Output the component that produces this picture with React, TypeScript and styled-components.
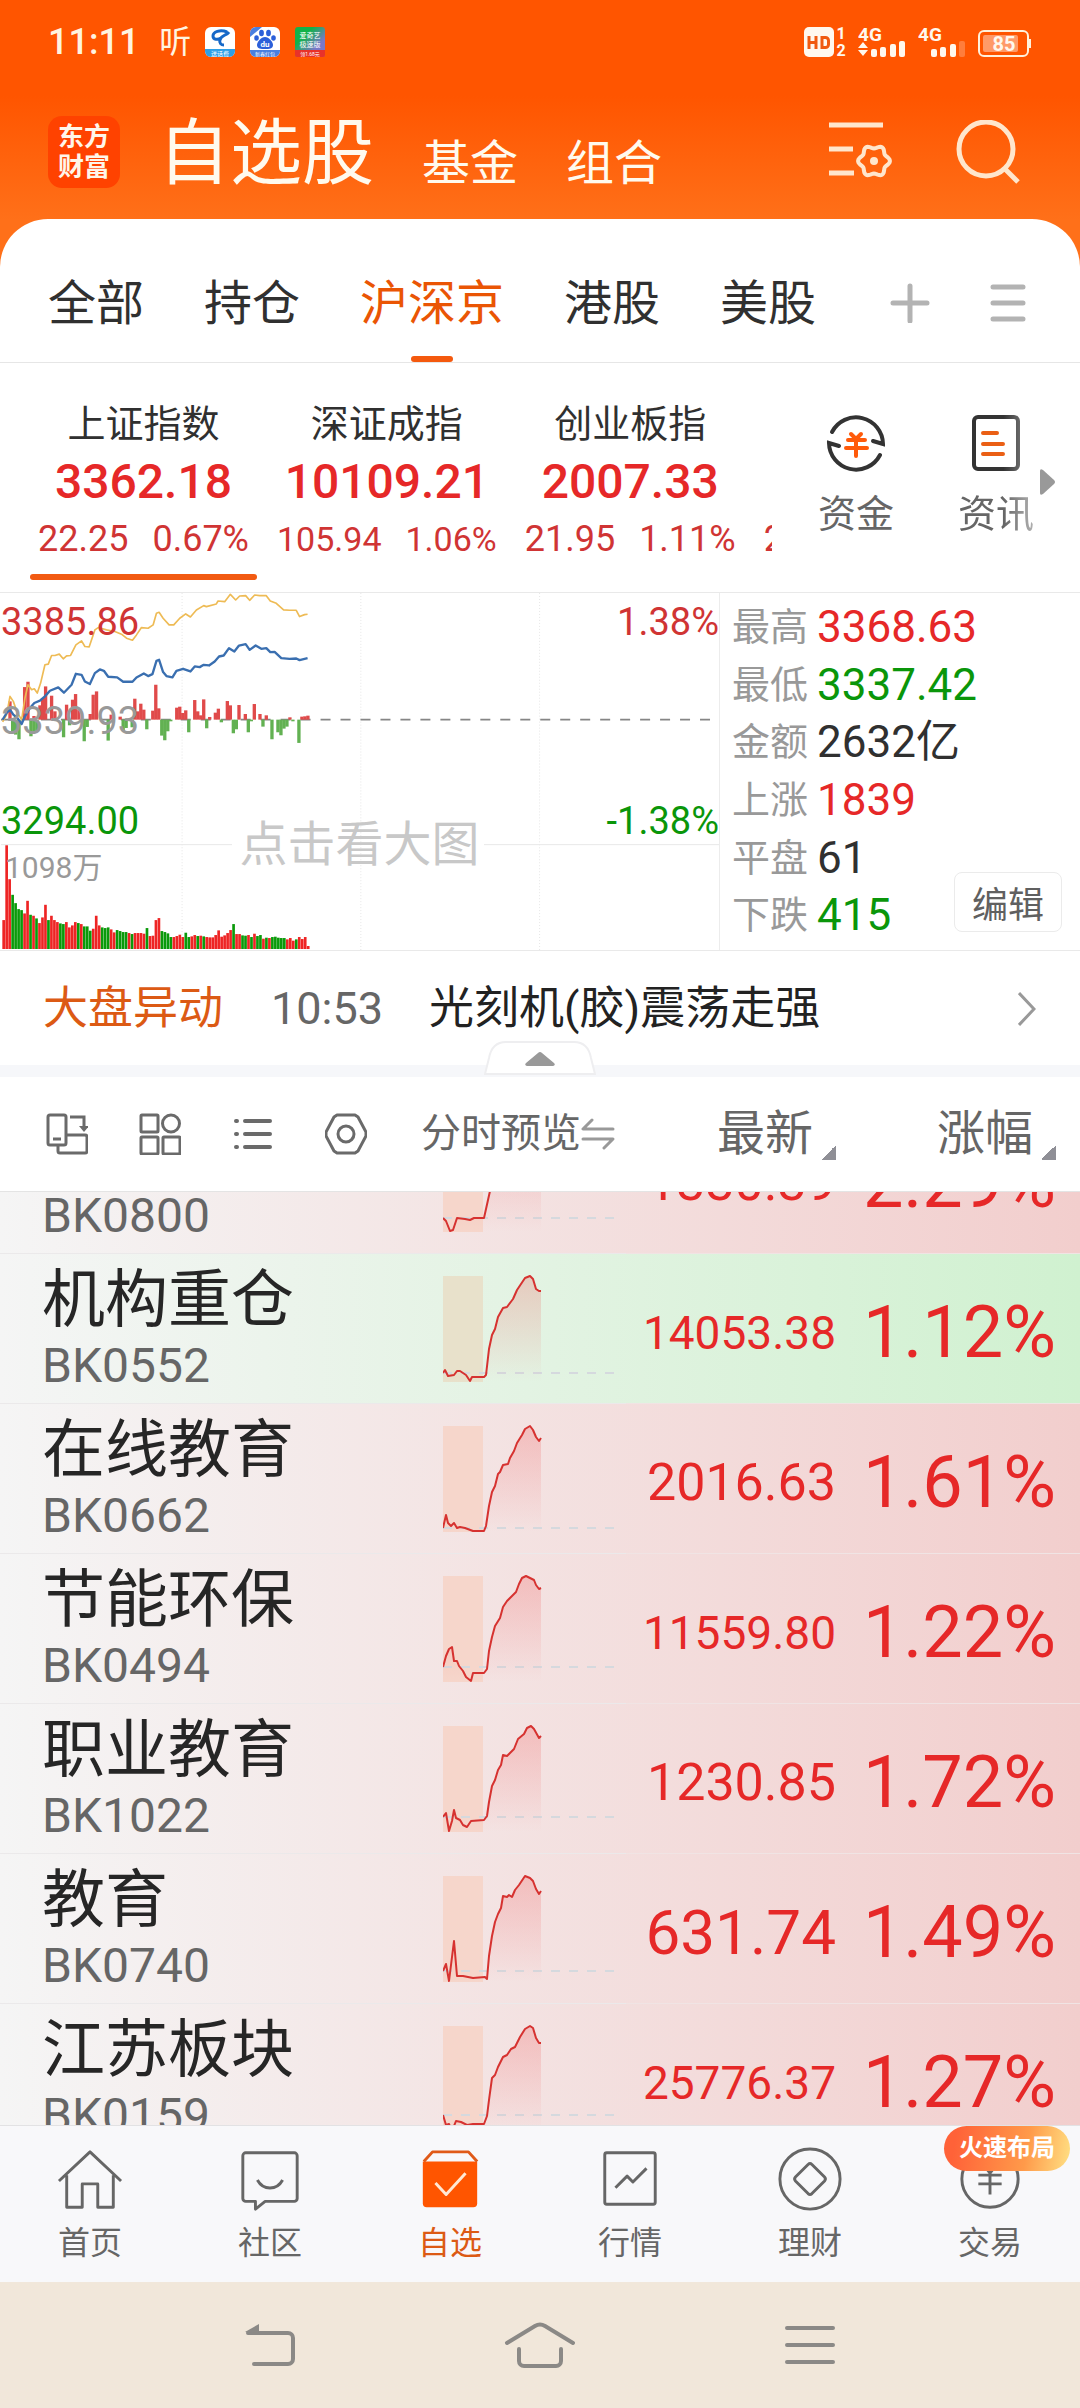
import React, { useLayoutEffect, useRef } from 'react';
import styled, { createGlobalStyle } from 'styled-components';

const RED = '#e62828';
const GREEN = '#0a960a';
const ORANGE = '#ea5504';

const GlobalStyle = createGlobalStyle`
  * { box-sizing: border-box; }
  html, body, #root { height: 100%; }
  body { margin: 0; background: #fff; }
  body, button {
    font-family: Roboto, "Noto Sans CJK SC", sans-serif;
    color: #303030;
  }
  button {
    margin: 0; padding: 0; border: 0; background: none;
    font-size: inherit; line-height: inherit; white-space: nowrap;
  }
  a { color: inherit; text-decoration: none; }
  svg { display: block; flex: none; }
`;

const Screen = styled.div`
  display: flex;
  flex-direction: column;
  height: 100vh;
  overflow: hidden;
`;

/* ---------- top ---------- */
const Top = styled.header`
  background: linear-gradient(#ff5500 0, #ff5500 96px, #ff7019 220px, #ff7019 100%);
`;
const StatusBar = styled.div`
  display: flex;
  align-items: center;
  height: 84px;
  padding: 0 48px;
  color: #fff4e0;
`;
const Clock = styled.time`
  margin-right: 20px;
  font-size: 36px;
  font-weight: 500;
  line-height: 40px;
`;
const Listen = styled.span`
  font-size: 32px;
  line-height: 40px;
`;
const NoticeIcons = styled.div`
  display: flex;
  gap: 15px;
  margin-left: 14px;
`;
const Signals = styled.div`
  display: flex;
  gap: 10px;
  margin-left: auto;
`;
const TitleBar = styled.div`
  display: flex;
  align-items: center;
  height: 135px;
  padding: 0 60px 0 48px;
`;
const Logo = styled.div`
  display: grid;
  place-content: center;
  width: 72px;
  height: 72px;
  margin-right: 38px;
  border-radius: 14px;
  background: #ff4200;
  color: #fff6ea;
  font-size: 26px;
  font-weight: 700;
  line-height: 30px;
`;
const Sections = styled.nav`
  display: flex;
  align-items: flex-end;
  gap: 48px;
  padding-top: 4px;
`;
const Section = styled.button<{ $main?: boolean }>`
  color: #fffaee;
  font-size: ${p => (p.$main ? 72 : 48)}px;
  line-height: ${p => (p.$main ? 80 : 60)}px;
`;
const TitleTools = styled.div`
  display: flex;
  align-items: center;
  gap: 64px;
  margin-left: auto;
`;
const Tabs = styled.nav`
  display: flex;
  align-items: stretch;
  gap: 60px;
  height: 144px;
  padding: 0 54px 0 48px;
  border-bottom: 1px solid #e6e6e6;
  border-radius: 48px 48px 0 0;
  background: #fff;
`;
const Tab = styled.button<{ $active?: boolean }>`
  display: flex;
  flex-direction: column;
  align-items: center;
  justify-content: center;
  position: relative;
  padding-top: 26px;
  color: ${p => (p.$active ? ORANGE : '#303030')};
  font-size: 48px;
  line-height: 60px;
  &::after {
    content: '';
    display: ${p => (p.$active ? 'block' : 'none')};
    position: absolute;
    bottom: 0;
    width: 42px;
    height: 6px;
    border-radius: 3px;
    background: #f4590e;
  }
`;
const TabTool = styled.button<{ $push?: boolean }>`
  display: flex;
  align-items: center;
  padding-top: 24px;
  ${p => p.$push && 'margin-left: auto;'}
`;

/* ---------- index strip ---------- */
const IndexStrip = styled.section`
  display: flex;
  height: 230px;
  border-bottom: 1px solid #e9e9e9;
`;
const Indices = styled.div`
  display: flex;
  gap: 12px;
  width: 772px;
  padding: 36px 0 12px 30px;
  overflow: hidden;
`;
const IndexCard = styled.button<{ $active?: boolean }>`
  display: flex;
  flex: none;
  flex-direction: column;
  align-items: center;
  position: relative;
  padding: 0 8px 6px;
  &::after {
    content: '';
    position: absolute;
    right: 0;
    bottom: 0;
    left: 0;
    height: 6px;
    border-radius: 3px;
    background: ${p => (p.$active ? '#f25a12' : 'transparent')};
  }
`;
const IndexName = styled.span`
  font-size: 38px;
  line-height: 50px;
`;
const IndexValue = styled.span`
  color: ${RED};
  font-size: 48px;
  font-weight: 500;
  line-height: 66px;
`;
const IndexMove = styled.span<{ $compact?: boolean }>`
  display: flex;
  gap: 24px;
  color: #d03434;
  font-size: ${p => (p.$compact ? 34 : 36)}px;
  line-height: 48px;
`;
const Shortcuts = styled.div`
  display: flex;
  flex: 1;
  align-items: center;
  padding: 0 24px 0 46px;
`;
const Shortcut = styled.button<{ $fade?: boolean }>`
  display: flex;
  flex-direction: column;
  align-items: center;
  gap: 16px;
  margin-right: ${p => (p.$fade ? 6 : 64)}px;
  padding-bottom: 4px;
  color: #666;
  font-size: 38px;
  line-height: 50px;
  ${p => p.$fade && '-webkit-mask-image: linear-gradient(90deg, #000 60%, rgba(0,0,0,.5));'}
`;
const MoreArrow = styled.svg`
  margin-top: 8px;
`;

/* ---------- market panel ---------- */
const Market = styled.section`
  display: grid;
  grid-template-columns: minmax(0, 2fr) minmax(0, 1fr);
  height: 358px;
  border-bottom: 1px solid #e9e9e9;
`;
const ChartBox = styled.div`
  position: relative;
  height: 357px;
  border-right: 1px solid #ececec;
`;
const ChartLabel = styled.span<{ $top: number; $right?: boolean; $color: string; $small?: boolean }>`
  position: absolute;
  top: ${p => p.$top}px;
  ${p => (p.$right ? 'right: 0;' : `left: ${p.$small ? 5 : 1}px;`)}
  color: ${p => p.$color};
  font-size: ${p => (p.$small ? 30 : 38)}px;
  line-height: 44px;
`;
const ChartHint = styled.a`
  position: absolute;
  top: 222px;
  right: 0;
  left: 0;
  color: #c8c8c8;
  font-size: 48px;
  line-height: 60px;
  text-align: center;
`;
const Stats = styled.dl`
  display: flex;
  position: relative;
  flex-direction: column;
  margin: 0;
  padding: 5px 0 6px 12px;
`;
const Stat = styled.div`
  display: flex;
  flex: 1;
  align-items: center;
  gap: 9px;
  dt { color: #999; font-size: 38px; line-height: 50px; }
  dd { margin: 0; font-size: 44px; line-height: 50px; }
`;
const StatValue = styled.dd<{ $color: string }>`
  color: ${p => p.$color};
`;
const EditButton = styled.button`
  position: absolute;
  right: 18px;
  bottom: 18px;
  width: 108px;
  height: 60px;
  border: 1px solid #ebebeb;
  border-radius: 8px;
  background: #fff;
  color: #606060;
  font-size: 36px;
`;

/* ---------- news ---------- */
const News = styled.section`
  position: relative;
  height: 126px;
  border-bottom: 12px solid #f6f7fa;
`;
const NewsLink = styled.a`
  display: flex;
  align-items: center;
  height: 114px;
  padding: 2px 44px 0 43px;
  font-size: 45px;
  line-height: 60px;
  color: #222;
  svg { margin-left: auto; }
`;
const NewsTag = styled.span`
  color: #dc5a14;
`;
const NewsTime = styled.time`
  margin: 0 46px 0 48px;
  color: #666;
`;
const Handle = styled.button`
  position: absolute;
  bottom: -10px;
  left: 50%;
  margin-left: -56px;
`;

/* ---------- quotes ---------- */
const Scroller = styled.main`
  flex: 1;
  min-height: 0;
  overflow-y: auto;
  scrollbar-width: none;
`;
const Quotes = styled.table`
  width: 100%;
  table-layout: fixed;
  border-collapse: separate;
  border-spacing: 0;
`;
const Col = styled.col<{ $width?: number }>`
  width: ${p => (p.$width ? `${p.$width}px` : 'auto')};
`;
const Head = styled.th<{ $edge?: boolean }>`
  position: sticky;
  top: 0;
  z-index: 1;
  height: 115px;
  padding: 0 ${p => (p.$edge ? 24 : 0)}px 0 0;
  border-bottom: 1px solid #e4e4e4;
  background: #fff;
  color: #666;
  font-weight: 400;
  text-align: left;
`;
const HeadTools = styled.div`
  display: flex;
  gap: 51px;
  padding-left: 46px;
`;
const HeadButton = styled.button<{ $wide?: boolean }>`
  display: flex;
  align-items: center;
  justify-content: ${p => (p.$wide ? 'flex-start' : 'flex-end')};
  gap: ${p => (p.$wide ? 0 : 8)}px;
  width: 100%;
  color: #666;
  font-size: ${p => (p.$wide ? 40 : 48)}px;
  line-height: 60px;
`;
const SortMark = styled.span`
  align-self: flex-end;
  width: 15px;
  height: 15px;
  margin-bottom: 4px;
  background: linear-gradient(135deg, transparent 50%, #8f8f96 50%);
`;
const Row = styled.tr<{ $down?: boolean }>`
  background: linear-gradient(90deg, #f5f5f5, ${p => (p.$down ? '#d0f1d0' : '#f2cecd')});
`;
const Cell = styled.td<{ $kind?: 'name' | 'chart' }>`
  height: 150px;
  padding: ${p => (p.$kind === 'name' ? '3px 0 0 42px' : '0 0 0 22px')};
  border-bottom: 1px solid #ebe9ea;
  vertical-align: middle;
`;
const Num = styled.td<{ $size: number; $edge?: boolean }>`
  padding: 37px ${p => (p.$edge ? 24 : 0)}px 0 0;
  border-bottom: 1px solid #f0e4e4;
  color: ${RED};
  font-size: ${p => p.$size}px;
  line-height: 84px;
  text-align: right;
  vertical-align: top;
  white-space: nowrap;
`;
const Name = styled.div`
  color: #262626;
  font-size: 63px;
  line-height: 72px;
  white-space: nowrap;
`;
const Code = styled.div`
  color: #666;
  font-size: 48px;
  line-height: 60px;
`;

/* ---------- bottom ---------- */
const TabBar = styled.nav`
  display: grid;
  grid-template-columns: repeat(6, 1fr);
  height: 157px;
  border-top: 1px solid #e2e2e4;
  background: #f8f8fa;
`;
const TabItem = styled.a<{ $active?: boolean }>`
  display: flex;
  position: relative;
  flex-direction: column;
  align-items: center;
  padding-top: 21px;
  color: ${p => (p.$active ? '#dc5a14' : '#666')};
  font-size: 32px;
  line-height: 40px;
  svg { margin-bottom: 10px; }
`;
const Badge = styled.span`
  position: absolute;
  top: 0;
  right: 10px;
  width: 126px;
  height: 45px;
  border-radius: 23px;
  background: linear-gradient(100deg, #ff6238 10%, #ff9a4a 65%, #ffe184 100%);
  color: #fff;
  font-size: 24px;
  font-weight: 700;
  line-height: 45px;
  text-align: center;
`;
const SystemNav = styled.nav`
  display: grid;
  grid-template-columns: 1fr 2fr 2fr 2fr 1fr;
  height: 126px;
  background: #f1e7da;
`;
const SystemKey = styled.button<{ $first?: boolean }>`
  display: flex;
  align-items: center;
  justify-content: center;
  ${p => p.$first && 'grid-column-start: 2;'}
`;

/* ---------- drawings ---------- */
const PhoneApp = () => (
  <svg width="30" height="30" viewBox="0 0 30 30" aria-hidden="true">
    <rect width="30" height="30" rx="6" fill="#fff" />
    <path d="M0 22h30v2a6 6 0 0 1-6 6H6a6 6 0 0 1-6-6z" fill="#2d9fe6" />
    <path d="M22 5C15 2 8 5 8 9c0 4 5 4 8 2M24 5c-3 4-8 3-9 8-1 3 1 5 4 5" fill="none" stroke="#1668c8" strokeWidth="3" />
    <text x="15" y="28.500" fontSize="6" fill="#fff" textAnchor="middle">送话费</text>
  </svg>
);
const BaiduApp = () => (
  <svg width="30" height="30" viewBox="0 0 30 30" aria-hidden="true">
    <rect width="30" height="30" rx="6" fill="#fff" />
    <path d="M0 23h30v1a6 6 0 0 1-6 6H6a6 6 0 0 1-6-6zM0 6a6 6 0 0 1 6-6h6L0 10z" fill="#4a7fe0" />
    <g fill="#2b5fd9">
      <ellipse cx="11.500" cy="6" rx="2.400" ry="3.200" />
      <ellipse cx="18.500" cy="6" rx="2.400" ry="3.200" />
      <ellipse cx="6.500" cy="11" rx="2.300" ry="2.800" />
      <ellipse cx="23.500" cy="11" rx="2.300" ry="2.800" />
      <path d="M15 10c4 0 8 5 8 8 0 4-4 4-8 4s-8 0-8-4c0-3 4-8 8-8z" />
    </g>
    <text x="15" y="20" fontSize="8" fontWeight="700" fill="#fff" textAnchor="middle">du</text>
    <text x="15" y="29" fontSize="5" fill="#fff" textAnchor="middle">新春红包</text>
  </svg>
);
const VideoApp = () => (
  <svg width="30" height="30" viewBox="0 0 30 30" aria-hidden="true">
    <defs>
      <linearGradient id="video" x1="0" x2="1" y1="0" y2="1">
        <stop offset="0.300" stopColor="#12b24a" />
        <stop offset="0.700" stopColor="#7a78c8" />
      </linearGradient>
    </defs>
    <rect width="30" height="30" rx="3" fill="url(#video)" />
    <path d="M0 23h30v5a2 2 0 0 1-2 2H2a2 2 0 0 1-2-2z" fill="#e8322a" />
    <text x="15" y="11" fontSize="7" fill="#fff" textAnchor="middle">爱奇艺</text>
    <text x="15" y="20" fontSize="7" fill="#fff" textAnchor="middle">极速版</text>
    <text x="15" y="29" fontSize="5" fill="#fff" textAnchor="middle">领1.68元</text>
  </svg>
);
const HdIcon = () => (
  <svg width="44" height="30" viewBox="0 0 44 30" aria-hidden="true">
    <rect width="30" height="30" rx="5" fill="#fff8ee" />
    <path d="M5 9v13M12 9v13M5 15.500h7M18 10.500v10h3.500a3 3 0 0 0 3-3v-4a3 3 0 0 0-3-3z" fill="none" stroke="#f05a10" strokeWidth="3" />
    <text x="37" y="12" fontSize="16" fontWeight="700" fill="#fff8ee" textAnchor="middle">1</text>
    <text x="37" y="29" fontSize="16" fontWeight="700" fill="#fff8ee" textAnchor="middle">2</text>
  </svg>
);
const Signal = ({ arrows }: { arrows?: boolean }) => (
  <svg width="50" height="30" viewBox="0 0 50 30" aria-hidden="true" fill="#fff8ee">
    <text x="0" y="14" fontSize="19" fontWeight="700">4G</text>
    {arrows && <path d="M5 15l5 6H0zM0 23h10l-5 6z" />}
    <rect x="13" y="22" width="6" height="8" rx="2" />
    <rect x="22" y="20" width="6" height="10" rx="2" />
    <rect x="32" y="17" width="6" height="13" rx="2" />
    <rect x="41" y="14" width="6" height="16" rx="2" opacity={arrows ? 1 : 0.25} />
  </svg>
);
const Battery = () => (
  <svg width="54" height="30" viewBox="0 0 54 30" aria-hidden="true">
    <rect x="1" y="4" width="49" height="25" rx="5" fill="none" stroke="#fff1dc" strokeWidth="2" />
    <rect x="5" y="8" width="35" height="17" rx="2" fill="#ff9a68" />
    <path d="M52 12v9" stroke="#fff1dc" strokeWidth="2" />
    <text x="26" y="24" fontSize="20" fontWeight="700" fill="#fff8ee" textAnchor="middle">85</text>
  </svg>
);

const gear = (() => {
  const pts: string[] = [];
  for (let i = 0; i < 72; i += 1) {
    const a = (i / 72) * Math.PI * 2;
    const r = 14.2 + 1.7 * Math.cos(6 * a);
    pts.push(`${(46 + r * Math.cos(a)).toFixed(1)} ${(41 + r * Math.sin(a)).toFixed(1)}`);
  }
  return `M${pts.join('L')}Z`;
})();
const FilterIcon = () => (
  <svg width="64" height="64" viewBox="0 0 64 64" aria-hidden="true">
    <path d="M1 5h54M1 29h24M1 53h25" stroke="#ffe6cc" strokeWidth="5" />
    <path d={gear} fill="none" stroke="#ffe6cc" strokeWidth="4" />
    <circle cx="46" cy="41" r="4" fill="#ffe6cc" />
  </svg>
);
const SearchIcon = () => (
  <svg width="64" height="64" viewBox="0 0 64 64" aria-hidden="true" fill="none" stroke="#ffe6cc" strokeWidth="5">
    <circle cx="30" cy="29" r="27" />
    <path d="M48 48l14 14" />
  </svg>
);
const FundsIcon = () => (
  <svg width="60" height="60" viewBox="0 0 60 60" aria-hidden="true" fill="none" strokeLinecap="round">
    <g stroke="#333" strokeWidth="4">
      <path d="M6 19A27 27 0 0 1 57 31l-10-3" />
      <path d="M54 42A27 27 0 0 1 3 30l10 3" />
    </g>
    <path d="M25 21l5 5 5-5M22 27h17M20 35h21M30 26v17" stroke="#ff5a0a" strokeWidth="4" />
  </svg>
);
const ReportIcon = () => (
  <svg width="60" height="60" viewBox="0 0 60 60" aria-hidden="true" fill="none" strokeLinecap="round">
    <rect x="8" y="4" width="44" height="52" rx="4" stroke="#333" strokeWidth="4" />
    <path d="M17 20h14M17 31h20M17 41h20" stroke="#ea5f14" strokeWidth="4" />
  </svg>
);

const yellow = '8,412 20,390 30,335 40,350 52,385 65,405 75,340 84,300 95,315 103,312 112,325 122,295 135,240 145,238 155,212 165,212 178,208 190,222 200,213 212,212 228,180 245,168 255,185 268,186 285,135 295,128 320,135 345,140 365,148 380,160 398,166 410,150 425,128 445,130 460,120 470,85 478,82 490,100 508,120 522,120 540,100 558,87 572,96 590,75 612,62 620,65 650,57 655,48 675,50 692,28 708,45 720,33 738,32 750,46 765,30 780,32 800,32 812,48 830,55 852,75 870,76 890,76 900,95 915,89 924,88';
const blue = '8,405 20,385 30,375 40,390 52,400 65,418 75,395 90,370 103,355 120,348 135,335 150,318 175,308 192,324 215,300 228,267 245,270 255,290 270,298 285,265 300,254 312,258 325,276 352,278 370,291 398,291 410,278 432,266 445,274 458,268 470,228 478,225 490,262 500,274 518,278 530,258 550,252 572,260 585,245 600,247 612,240 628,242 645,230 658,215 672,212 688,190 704,200 718,182 738,178 750,195 768,182 785,192 800,190 812,202 825,201 845,220 870,222 890,221 900,226 924,220';
const momentum: [number, number][] = [
  [30, 350], [74, 307], [84, 291], [102, 394], [120, 362], [128, 340], [137, 305], [155, 333], [165, 380], [200, 360], [218, 345], [227, 328], [237, 375],
  [271, 388], [280, 330], [290, 320], [334, 390], [361, 396], [405, 342], [414, 380], [423, 357], [432, 375], [459, 378], [468, 300], [477, 371],
  [531, 369], [540, 366], [549, 385], [558, 377], [585, 346], [594, 380], [603, 392], [612, 344], [630, 397], [647, 384], [656, 372],
  [683, 349], [692, 362], [718, 361], [737, 388], [764, 358], [781, 388], [800, 392], [871, 398], [907, 396], [916, 395], [925, 393],
  [38, 440], [47, 450], [57, 464], [93, 455], [102, 445], [111, 440], [191, 458], [209, 422], [253, 470], [262, 427], [325, 468],
  [370, 438], [379, 430], [397, 428], [441, 434], [486, 453], [495, 467], [504, 440], [513, 410], [567, 443], [621, 431], [665, 413],
  [701, 446], [710, 434], [746, 443], [755, 410], [790, 426], [817, 464], [835, 443], [844, 452], [853, 432], [862, 426], [880, 410], [898, 475],
];
const volumes = [
  1008, 783, 885, 932, 957, 975, 978, 988, 950, 992, 995, 1003, 1017, 1000, 962, 1008, 995, 1008, 1014, 1018, 1020, 1014, 1030, 1024, 1014, 1017,
  1020, 1027, 1027, 1040, 1034, 995, 1024, 1030, 1032, 1030, 1036, 1045, 1038, 1041, 1044, 1044, 1047, 1050, 1047, 1047, 1047, 1049, 1032, 1056,
  1055, 1008, 1002, 1041, 1044, 1048, 1059, 1059, 1056, 1052, 1059, 1046, 1059, 1057, 1053, 1056, 1055, 1057, 1059, 1060, 1060, 1053, 1039, 1058,
  1054, 1047, 1038, 1020, 1050, 1050, 1054, 1055, 1053, 1059, 1049, 1056, 1053, 1064, 1061, 1062, 1059, 1058, 1061, 1062, 1062, 1066, 1062, 1070,
  1066, 1059, 1065, 1059, 1086,
];
const volumeSigns = 'rrrggggrrgrgrrrgrrrggrrrrgrgggrrrgggrrggggrgrrrrgrrrrggggrrrrggrrgrgrrrrrrrrrgrrggrgrggrgrgggggrrrgrrr';

const MarketChart = () => (
  <svg width="100%" height="100%" viewBox="0 24 2160 1074" preserveAspectRatio="none" role="img" aria-label="上证指数分时图">
    <path d="M547 24v1074M1084 24v1074M1621 24v1074" stroke="#e6e6e6" strokeWidth="3" strokeDasharray="3 6" />
    <path d="M3 781h694M1454 781h706" stroke="#e8e8e8" strokeWidth="3" />
    <path d="M3 405h930M963 405h1197" stroke="#858585" strokeWidth="5" strokeDasharray="30 30" />
    {momentum.map(([x, y]) => (
      <rect key={`${x}-${y}`} x={x - 5} y={Math.min(y, 405)} width="10" height={Math.abs(y - 405)} fill={y < 405 ? '#e04a4a' : '#62b152'} />
    ))}
    {volumes.map((y, i) => (
      <rect key={i} x={7 + i * 8.97} y={y} width="8" height={1095 - y} fill={volumeSigns[i] === 'g' ? '#0a9a0a' : '#ee2424'} />
    ))}
    <polyline points={yellow} fill="none" stroke="#eebb55" strokeWidth="5" strokeLinejoin="round" />
    <polyline points={blue} fill="none" stroke="#3a6fb0" strokeWidth="7" strokeLinejoin="round" />
  </svg>
);

const Spark = ({ points, base, down }: { points: string; base: number; down?: boolean }) => (
  <svg width="172" height="110" viewBox="0 -2 172 110" aria-hidden="true">
    <defs>
      <linearGradient id="fill" x1="0" x2="0" y1="0" y2="1">
        <stop offset="0" stopColor="#f03a3a" stopOpacity="0.220" />
        <stop offset="1" stopColor="#f03a3a" stopOpacity="0" />
      </linearGradient>
    </defs>
    <rect width="40" height="106" fill={down ? '#e8dcc4' : '#f6d2c4'} opacity="0.800" />
    <path d={`M0 ${base}H172`} stroke="#d5d9de" strokeWidth="2" strokeDasharray="9 9" />
    <polygon points={`0,106 ${points} 98,106`} fill="url(#fill)" />
    <polyline points={points} fill="none" stroke="#d63230" strokeWidth="2" strokeLinejoin="round" />
  </svg>
);

const LayoutIcon = () => (
  <svg width="42" height="42" viewBox="0 0 42 42" aria-hidden="true" fill="none" stroke="#6a6a6a" strokeWidth="3">
    <rect x="2" y="2" width="18" height="30" rx="2" />
    <path d="M7 26h8M24 4h14v12" />
    <path d="M33 13h10l-5 6z" fill="#6a6a6a" stroke="none" />
    <path d="M20 22h19a2 2 0 0 1 2 2v14a2 2 0 0 1-2 2H14a2 2 0 0 1-2-2v-6" />
  </svg>
);
const GridIcon = () => (
  <svg width="42" height="42" viewBox="0 0 42 42" aria-hidden="true" fill="none" stroke="#6a6a6a" strokeWidth="3">
    <rect x="2" y="2" width="17" height="17" rx="1" />
    <circle cx="32" cy="10.500" r="8.500" />
    <rect x="2" y="24" width="17" height="17" rx="1" />
    <rect x="24" y="24" width="17" height="17" rx="1" />
  </svg>
);
const ListIcon = () => (
  <svg width="42" height="42" viewBox="0 0 42 42" aria-hidden="true" stroke="#6a6a6a" strokeWidth="4" strokeLinecap="round">
    <path d="M13 8h25M13 21h25M13 34h25M4 8h1M4 21h1M4 34h1" />
  </svg>
);
const HexIcon = () => (
  <svg width="42" height="42" viewBox="0 0 42 42" aria-hidden="true" fill="none" stroke="#6a6a6a" strokeWidth="3" strokeLinejoin="round">
    <path d="M12 2h18l3 2 8 15v4l-8 15-3 2H12l-3-2L1 23v-4L9 4z" />
    <circle cx="21" cy="21" r="8" />
  </svg>
);
const SwapIcon = () => (
  <svg width="34" height="32" viewBox="0 0 34 32" aria-hidden="true" fill="none" stroke="#999" strokeWidth="3" strokeLinecap="round" strokeLinejoin="round">
    <path d="M11 2L2 11h30M2 21h30l-9 9" />
  </svg>
);

const tabIcons: Record<string, React.ReactNode> = {
  首页: <path d="M1 33L33 3l32 30M9 27v33h16V36h16v24h16V27" />,
  社区: (
    <>
      <path d="M8 4h50a3 3 0 0 1 3 3v44a3 3 0 0 1-3 3H28l-10 8v-8H8a3 3 0 0 1-3-3V7a3 3 0 0 1 3-3z" />
      <path d="M20 32c6 11 20 11 26 0" />
    </>
  ),
  自选: (
    <>
      <path d="M5 13h56v43a4 4 0 0 1-4 4H9a4 4 0 0 1-4-4z" fill="#ff5500" stroke="none" />
      <path d="M6 13l9-10h37l9 10" stroke="#e05a18" />
      <path d="M18 35l11 12 20-22" stroke="#ffe8d4" strokeLinecap="butt" />
    </>
  ),
  行情: (
    <>
      <rect x="7" y="4" width="52" height="53" rx="2" />
      <path d="M18 40l12-12 6 6 14-14" />
    </>
  ),
  理财: (
    <>
      <circle cx="33" cy="31" r="31" />
      <path d="M31 16a3 3 0 0 1 4 0l13 13a3 3 0 0 1 0 4L35 46a3 3 0 0 1-4 0L18 33a3 3 0 0 1 0-4z" />
    </>
  ),
  交易: (
    <>
      <circle cx="33" cy="31" r="29" />
      <path d="M26 16l7 9 7-9M21 27h24M21 36h24M33 26v21" />
    </>
  ),
};
const TabIcon = ({ name }: { name: string }) => (
  <svg width="66" height="66" viewBox="-1 -1 68 66" aria-hidden="true" fill="none" stroke="#666" strokeWidth="3" strokeLinejoin="round">
    {tabIcons[name]}
  </svg>
);

/* ---------- data ---------- */
const indices = [
  { name: '上证指数', value: '3362.18', move: '22.25', pct: '0.67%' },
  { name: '深证成指', value: '10109.21', move: '105.94', pct: '1.06%' },
  { name: '创业板指', value: '2007.33', move: '21.95', pct: '1.11%' },
  { name: '沪深300', value: '4017.88', move: '28.31', pct: '0.71%' },
];
const stats = [
  ['最高', '3368.63', RED],
  ['最低', '3337.42', GREEN],
  ['金额', '2632亿', '#303030'],
  ['上涨', '1839', RED],
  ['平盘', '61', '#303030'],
  ['下跌', '415', GREEN],
];
const quotes = [
  { name: '人工智能', code: 'BK0800', price: '1330.39', pct: '2.29%', base: 92, points: '0,92 3,95 7,105 10,104 14,92 22,93 27,94 31,92 41,92 47,65 52,48 60,30 72,14 82,2 87,0 93,10 98,12' },
  { name: '机构重仓', code: 'BK0552', price: '14053.38', pct: '1.12%', base: 97, down: true, points: '0,97 2,94 5,100 11,99 14,95 17,95 23,99 27,105 29,101 41,101 43,99 46,73 49,59 52,53 55,41 60,32 64,31 70,23 74,14 82,2 87,0 90,3 93,13 96,15 98,15' },
  { name: '在线教育', code: 'BK0662', price: '2016.63', pct: '1.61%', base: 102, points: '0,102 3,89 5,97 8,100 11,97 14,102 17,101 22,102 30,105 41,105 43,100 46,80 49,66 52,60 55,48 57,46 60,39 65,38 67,32 71,25 74,17 79,9 82,3 87,0 90,4 93,11 96,15 98,12' },
  { name: '节能环保', code: 'BK0494', price: '11559.80', pct: '1.22%', base: 91, points: '0,91 3,80 6,73 9,71 11,85 14,85 16,90 20,95 23,101 28,105 30,97 41,97 44,93 46,75 49,61 52,50 57,42 60,31 64,25 69,20 73,16 76,8 79,2 83,0 87,2 91,4 93,9 96,13 98,12' },
  { name: '职业教育', code: 'BK1022', price: '1230.85', pct: '1.72%', base: 91, points: '0,91 3,87 6,105 9,95 11,84 13,92 17,94 20,99 24,101 28,95 41,94 44,90 46,76 49,60 52,54 55,44 58,39 60,29 64,30 67,27 71,23 75,13 81,8 84,2 88,0 91,3 96,12 98,10' },
  { name: '教育', code: 'BK0740', price: '631.74', pct: '1.49%', base: 95, points: '0,95 3,88 6,105 11,65 14,100 20,100 30,102 42,101 44,103 46,80 49,60 52,46 55,38 58,32 60,20 64,21 66,19 69,21 72,14 76,9 82,0 87,2 90,5 93,13 96,18 98,15' },
  { name: '江苏板块', code: 'BK0159', price: '25776.37', pct: '1.27%', base: 89, points: '0,89 3,99 6,98 9,105 13,95 18,96 24,99 30,98 41,98 44,90 46,74 49,52 52,49 55,41 60,31 64,29 68,23 72,21 77,11 82,3 87,0 90,2 93,12 96,17 98,17' },
];
/* long prices step down so that they stay inside their column */
const priceSize = (price: string) => (price.length > 7 ? 46 : price.length > 6 ? 52 : 62);

export default function App() {
  const scroller = useRef<HTMLElement>(null);
  useLayoutEffect(() => {
    if (scroller.current) scroller.current.scrollTop = 88;
  }, []);

  return (
    <>
      <GlobalStyle />
      <Screen>
        <Top>
          <StatusBar>
            <Clock>11:11</Clock>
            <Listen>听</Listen>
            <NoticeIcons>
              <PhoneApp />
              <BaiduApp />
              <VideoApp />
            </NoticeIcons>
            <Signals>
              <HdIcon />
              <Signal arrows />
              <Signal />
              <Battery />
            </Signals>
          </StatusBar>
          <TitleBar>
            <Logo>
              <span>东方</span>
              <span>财富</span>
            </Logo>
            <Sections>
              <Section $main>自选股</Section>
              <Section>基金</Section>
              <Section>组合</Section>
            </Sections>
            <TitleTools>
              <button aria-label="筛选设置"><FilterIcon /></button>
              <button aria-label="搜索"><SearchIcon /></button>
            </TitleTools>
          </TitleBar>
          <Tabs>
            {['全部', '持仓', '沪深京', '港股', '美股'].map(t => (
              <Tab key={t} $active={t === '沪深京'}>{t}</Tab>
            ))}
            <TabTool $push aria-label="添加">
              <svg width="40" height="40" viewBox="0 0 40 40" stroke="#b3b3b3" strokeWidth="5" strokeLinecap="round">
                <path d="M20 3v35M3 20h34" />
              </svg>
            </TabTool>
            <TabTool aria-label="管理分组">
              <svg width="36" height="40" viewBox="0 0 36 40" stroke="#b3b3b3" strokeWidth="5" strokeLinecap="round">
                <path d="M3 4h30M3 20h30M3 36h30" />
              </svg>
            </TabTool>
          </Tabs>
        </Top>

        <IndexStrip>
          <Indices>
            {indices.map((x, i) => (
              <IndexCard key={x.name} $active={i === 0}>
                <IndexName>{x.name}</IndexName>
                <IndexValue>{x.value}</IndexValue>
                <IndexMove $compact={x.move.length > 5}>
                  <span>{x.move}</span>
                  <span>{x.pct}</span>
                </IndexMove>
              </IndexCard>
            ))}
          </Indices>
          <Shortcuts>
            <Shortcut><FundsIcon />资金</Shortcut>
            <Shortcut $fade><ReportIcon />资讯</Shortcut>
            <MoreArrow width="15" height="26" viewBox="0 0 15 26" aria-hidden="true" fill="#999">
              <path d="M0 2q0-3 3-1l11 10q2 2 0 4L3 25q-3 2-3-1z" />
            </MoreArrow>
          </Shortcuts>
        </IndexStrip>

        <Market>
          <ChartBox>
            <MarketChart />
            <ChartLabel $top={7} $color="#d03434">3385.86</ChartLabel>
            <ChartLabel $top={7} $color="#d03434" $right>1.38%</ChartLabel>
            <ChartLabel $top={106} $color="#999">3339.93</ChartLabel>
            <ChartLabel $top={206} $color={GREEN}>3294.00</ChartLabel>
            <ChartLabel $top={206} $color={GREEN} $right>-1.38%</ChartLabel>
            <ChartLabel $top={253} $color="#999" $small>1098万</ChartLabel>
            <ChartHint href="#chart">点击看大图</ChartHint>
          </ChartBox>
          <Stats>
            {stats.map(([label, value, color]) => (
              <Stat key={label}>
                <dt>{label}</dt>
                <StatValue $color={color}>{value}</StatValue>
              </Stat>
            ))}
            <EditButton>编辑</EditButton>
          </Stats>
        </Market>

        <News>
          <NewsLink href="#news">
            <NewsTag>大盘异动</NewsTag>
            <NewsTime>10:53</NewsTime>
            <span>光刻机(胶)震荡走强</span>
            <svg width="18" height="34" viewBox="0 0 18 34" aria-hidden="true" fill="none" stroke="#999" strokeWidth="3">
              <path d="M1 1l15 16L1 33" />
            </svg>
          </NewsLink>
          <Handle aria-label="收起">
            <svg width="112" height="34" viewBox="0 0 112 34" aria-hidden="true">
              <path d="M1 33l4-16Q8 1 22 1h68q14 0 17 16l4 16z" fill="#fff" stroke="#eeeef0" strokeWidth="2" />
              <path d="M43 25q-3-1-1-3l12-10q2-2 4 0l12 10q2 2-1 3z" fill="#999" />
            </svg>
          </Handle>
        </News>

        <Scroller ref={scroller}>
          <Quotes>
            <colgroup>
              <Col />
              <Col $width={205} />
              <Col $width={210} />
              <Col $width={244} />
            </colgroup>
            <thead>
              <tr>
                <Head scope="col">
                  <HeadTools>
                    <button aria-label="横屏"><LayoutIcon /></button>
                    <button aria-label="宫格"><GridIcon /></button>
                    <button aria-label="列表"><ListIcon /></button>
                    <button aria-label="设置"><HexIcon /></button>
                  </HeadTools>
                </Head>
                <Head scope="col"><HeadButton $wide>分时预览<SwapIcon /></HeadButton></Head>
                <Head scope="col"><HeadButton>最新<SortMark /></HeadButton></Head>
                <Head scope="col" $edge><HeadButton>涨幅<SortMark /></HeadButton></Head>
              </tr>
            </thead>
            <tbody>
              {quotes.map(q => (
                <Row key={q.code} $down={q.down}>
                  <Cell $kind="name">
                    <Name>{q.name}</Name>
                    <Code>{q.code}</Code>
                  </Cell>
                  <Cell $kind="chart"><Spark points={q.points} base={q.base} down={q.down} /></Cell>
                  <Num $size={priceSize(q.price)}>{q.price}</Num>
                  <Num $size={72} $edge>{q.pct}</Num>
                </Row>
              ))}
            </tbody>
          </Quotes>
        </Scroller>

        <TabBar>
          {Object.keys(tabIcons).map(t => (
            <TabItem key={t} href={`#${t}`} $active={t === '自选'}>
              <TabIcon name={t} />
              {t}
              {t === '交易' && <Badge>火速布局</Badge>}
            </TabItem>
          ))}
        </TabBar>

        <SystemNav>
          <SystemKey $first aria-label="返回">
            <svg width="52" height="44" viewBox="0 0 52 44" aria-hidden="true" fill="none" stroke="#8b8986" strokeWidth="4" strokeLinecap="round">
              <path d="M4 10h40a5 5 0 0 1 5 5v21a5 5 0 0 1-5 5H10" />
              <path d="M1 9l14-8v9z" fill="#8b8986" stroke="none" />
            </svg>
          </SystemKey>
          <SystemKey aria-label="主屏幕">
            <svg width="72" height="46" viewBox="0 0 72 46" aria-hidden="true" fill="none" stroke="#8b8986" strokeWidth="4" strokeLinecap="round">
              <path d="M3 21L31 4q5-3 10 0l28 17M15 27v12a5 5 0 0 0 5 5h32a5 5 0 0 0 5-5V27" />
            </svg>
          </SystemKey>
          <SystemKey aria-label="最近任务">
            <svg width="52" height="40" viewBox="0 0 52 40" aria-hidden="true" stroke="#8b8986" strokeWidth="4" strokeLinecap="round">
              <path d="M3 3h46M3 20h46M3 37h46" />
            </svg>
          </SystemKey>
        </SystemNav>
      </Screen>
    </>
  );
}
